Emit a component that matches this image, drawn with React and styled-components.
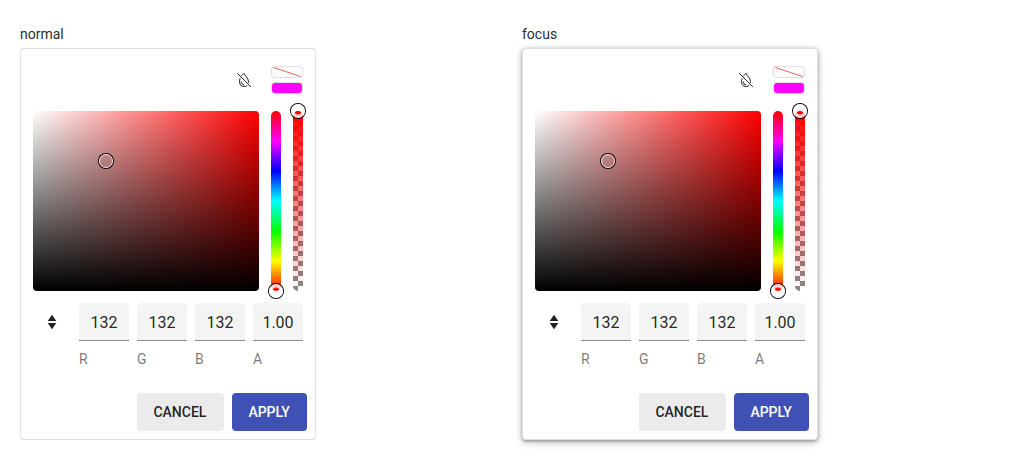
import React from "react";
import styled, { createGlobalStyle, css } from "styled-components";

const GlobalStyle = createGlobalStyle`
  body { margin: 0; background: #fff; font-family: Roboto, sans-serif; font-size: 14px; line-height: 20px; color: rgba(0,0,0,.87); }
  * { box-sizing: border-box; }
`;

const Page = styled.main`
  display: grid;
  grid-template-columns: 296px 296px;
  column-gap: 206px;
  align-items: start;
  min-height: 460px;
  padding: 24px 20px 20px;
`;

const Label = styled.div`
  height: 24px;
`;

const Card = styled.section`
  width: 296px;
  height: 392px;
  padding: 12px;
  display: flex;
  flex-direction: column;
  border: 1px solid rgba(0, 0, 0, 0.12);
  border-radius: 4px;
  background: #fff;
  ${(p) => p.$focused && css`
    box-shadow: 0 1px 5px 0 rgba(0,0,0,.26), 0 2px 2px 0 rgba(0,0,0,.14), 0 3px 10px 0 rgba(0,0,0,.14);
  `}
`;

const Header = styled.div`
  display: flex;
  justify-content: flex-end;
  align-items: center;
  height: 38px;
  margin-bottom: 12px;
`;

const ClearIcon = styled.svg`
  display: block;
  width: 16px;
  height: 16px;
  margin-right: 19px;
`;

const Previews = styled.div`
  display: flex;
  flex-direction: column;
  gap: 4px;
  width: 32px;
`;

const Swatch = styled.div`
  height: 12px;
  border: 1px solid rgba(0, 0, 0, 0.12);
  border-radius: 4px;
  background: ${(p) => p.$color || "#fff"};
  background-clip: padding-box;
  overflow: hidden;
  svg { display: block; width: 30px; height: 10px; }
`;

const Canvas = styled.div`
  display: flex;
  gap: 12px;
  height: 180px;
`;

const Saturation = styled.div`
  position: relative;
  width: 226px;
  border-radius: 4px;
  background: linear-gradient(to bottom, transparent, #000), linear-gradient(to right, #fff, transparent), #f00;
`;

const Track = styled.div`
  position: relative;
  width: 10px;
  border-radius: 5px;
`;

const HueTrack = styled(Track)`
  background: linear-gradient(to top, #f00, #ff0, #0f0, #0ff, #00f, #f0f, #f00);
`;

const AlphaTrack = styled(Track)`
  background:
    linear-gradient(to top, transparent, #f00),
    repeating-conic-gradient(#888 0 25%, #fff 0 50%) 0 0 / 10px 10px;
`;

const Handle = styled.span`
  position: absolute;
  width: 14px;
  height: 14px;
  left: ${(p) => p.$x}px;
  top: ${(p) => p.$y}px;
  transform: translate(-50%, -50%);
  border-radius: 50%;
  border: 1px solid rgba(255, 255, 255, 0.8);
  box-shadow: 0 0 0 1px #000;
`;

const SliderHandle = styled(Handle)`
  border: 0;
  background: radial-gradient(circle, transparent 3.2px, rgba(255, 255, 255, 0.8) 3.9px);
`;

const Inputs = styled.div`
  display: flex;
  gap: 8px;
  margin-top: 12px;
`;

const Toggle = styled.div`
  width: 38px;
  height: 38px;
  display: grid;
  place-items: center;
  svg { display: block; }
`;

const Field = styled.label`
  width: 50px;
  display: block;
  color: rgba(0, 0, 0, 0.54);
`;

const Value = styled.div`
  height: 38px;
  margin-bottom: 8px;
  border-bottom: 1px solid rgba(0, 0, 0, 0.42);
  border-radius: 4px 4px 0 0;
  background: #f4f4f4;
  color: rgba(0, 0, 0, 0.87);
  font-size: 16px;
  line-height: 40px;
  text-align: center;
`;

const Actions = styled.div`
  display: flex;
  justify-content: flex-end;
  gap: 8px;
  margin: auto -4px -4px 0;
`;

const Button = styled.button`
  height: 38px;
  width: ${(p) => p.$width}px;
  padding: 0 0 0 16.4px;
  text-align: left;
  white-space: nowrap;
  border: 0;
  border-radius: 4px;
  background: ${(p) => (p.$primary ? "#3f51b5" : "#ebebeb")};
  color: ${(p) => (p.$primary ? "#fff" : "rgba(0,0,0,.87)")};
  font: 500 14px/38px Roboto, sans-serif;
`;

const channels = [["R", "132"], ["G", "132"], ["B", "132"], ["A", "1.00"]];

function ColorEditor({ focused }) {
  return (
    <Card $focused={focused}>
      <Header>
        <ClearIcon viewBox="0 0 16 16" fill="none" stroke="#222" strokeWidth="1">
          <path d="M1.2 1.2 14.8 14.8" />
          <path d="M5.2 4.2C6.3 2.9 7.3 1.9 7.7 1.5h.6C8.7 4 12.5 5.8 12.5 9.7c0 .4 0 .8-.1 1.2M4.2 6.2C3.7 7.3 3.5 8.6 3.5 9.7c0 2.8 1.9 4.8 4.5 4.8 1.3 0 2.4-.4 3.2-1.2" />
          <path d="M5.3 9.5c0 2 1 3.2 2.7 3.2" />
        </ClearIcon>
        <Previews>
          <Swatch>
            <svg viewBox="0 0 30 10"><path d="M0 0 30 10" stroke="#f44336" strokeWidth=".85" /></svg>
          </Swatch>
          <Swatch $color="#f0f" />
        </Previews>
      </Header>
      <Canvas>
        <Saturation><Handle $x={73} $y={50} /></Saturation>
        <HueTrack><SliderHandle $x={5} $y={180} /></HueTrack>
        <AlphaTrack><SliderHandle $x={5} $y={0} /></AlphaTrack>
      </Canvas>
      <Inputs>
        <Toggle>
          <svg width="16" height="16" viewBox="0 0 16 16" fill="#212121"><path d="M8 .8 12.3 7H3.7zM8 15.2 3.7 9h8.6z" /></svg>
        </Toggle>
        {channels.map(([name, value]) => (
          <Field key={name}><Value>{value}</Value>{name}</Field>
        ))}
      </Inputs>
      <Actions>
        <Button $width={87}>CANCEL</Button>
        <Button $width={75} $primary>APPLY</Button>
      </Actions>
    </Card>
  );
}

export default function App() {
  return (
    <>
      <GlobalStyle />
      <Page>
        <div><Label>normal</Label><ColorEditor /></div>
        <div><Label>focus</Label><ColorEditor focused /></div>
      </Page>
    </>
  );
}
